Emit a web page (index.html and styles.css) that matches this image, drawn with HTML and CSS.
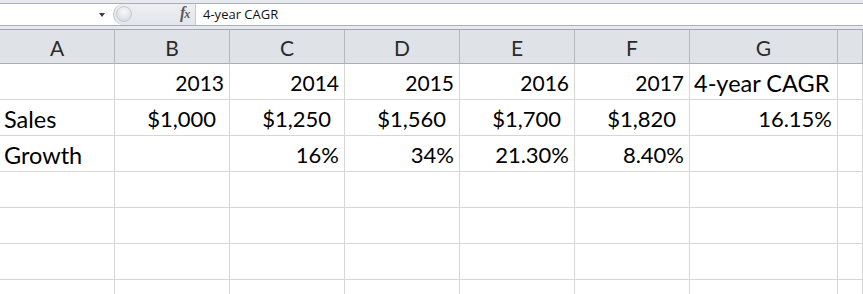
FILE: index.html
```html
<!DOCTYPE html>
<html>
<head>
<meta charset="utf-8">
<link rel="stylesheet" href="styles.css">
</head>
<body>
<div class="app">
  <div class="top-strip"></div>
  <div class="fbar">
    <div class="namebox"><span class="caret"></span></div>
    <div class="capsule">
      <span class="grip"></span>
      <span class="fx">f<span class="fx-x">x</span></span>
    </div>
    <div class="formula">4-year CAGR</div>
  </div>
  <div class="gap"></div>
  <div class="sheet">
    <div class="hd">A</div><div class="hd">B</div><div class="hd">C</div><div class="hd">D</div><div class="hd">E</div><div class="hd">F</div><div class="hd">G</div><div class="hd last"></div>

    <div class="c"></div><div class="c r yr">2013</div><div class="c r yr">2014</div><div class="c r yr">2015</div><div class="c r yr">2016</div><div class="c r yr">2017</div><div class="c l">4-year CAGR</div><div class="c"></div>

    <div class="c l">Sales</div><div class="c r cur">$1,000</div><div class="c r cur">$1,250</div><div class="c r cur">$1,560</div><div class="c r cur">$1,700</div><div class="c r cur">$1,820</div><div class="c r">16.15%</div><div class="c"></div>

    <div class="c l">Growth</div><div class="c"></div><div class="c r">16%</div><div class="c r">34%</div><div class="c r">21.30%</div><div class="c r">8.40%</div><div class="c"></div><div class="c"></div>

    <div class="c"></div><div class="c"></div><div class="c"></div><div class="c"></div><div class="c"></div><div class="c"></div><div class="c"></div><div class="c"></div>
    <div class="c"></div><div class="c"></div><div class="c"></div><div class="c"></div><div class="c"></div><div class="c"></div><div class="c"></div><div class="c"></div>
    <div class="c"></div><div class="c"></div><div class="c"></div><div class="c"></div><div class="c"></div><div class="c"></div><div class="c"></div><div class="c"></div>
    <div class="c"></div><div class="c"></div><div class="c"></div><div class="c"></div><div class="c"></div><div class="c"></div><div class="c"></div><div class="c"></div>
  </div>
</div>
</body>
</html>
```

FILE: styles.css
```css
html, body {
  margin: 0;
  padding: 0;
  background: #ffffff;
  overflow: hidden;
}
.app {
  width: 863px;
  height: 294px;
  overflow: hidden;
}
.top-strip {
  height: 3px;
  background: #e6e9ed;
  border-bottom: 1px solid #a9afb7;
}
.fbar {
  display: flex;
  height: 21px;
  background: #ffffff;
  border-bottom: 1px solid #a9afb7;
}
.namebox {
  width: 113px;
  position: relative;
  background: #ffffff;
}
.caret {
  position: absolute;
  left: 99px;
  top: 9px;
  width: 0;
  height: 0;
  border-left: 3.5px solid transparent;
  border-right: 3.5px solid transparent;
  border-top: 4px solid #3c3c3c;
}
.capsule {
  width: 83px;
  position: relative;
  background: linear-gradient(#eef0f3, #e2e5e9);
  border-radius: 11px 0 0 11px;
  border-left: 1px solid #b9bec5;
  box-sizing: border-box;
  border-right: 1px solid #c6cad0;
}
.grip {
  position: absolute;
  left: 2px;
  top: 2px;
  width: 16px;
  height: 16px;
  border-radius: 50%;
  background: radial-gradient(circle at 50% 35%, #f8f9fa, #d2d5da);
  border: 1px solid #c6cad0;
  box-sizing: border-box;
}
.fx {
  position: absolute;
  left: 66px;
  top: 0px;
  font-family: "Liberation Serif", serif;
  font-style: italic;
  font-weight: bold;
  font-size: 16px;
  color: #5a5a5a;
  letter-spacing: -1px;
}
.fx-x {
  font-size: 12px;
}
.formula {
  flex: 1;
  padding-left: 7px;
  font-family: "Open Sans", sans-serif;
  font-size: 13px;
  line-height: 21px;
  color: #111;
}
.gap {
  height: 3px;
  background: #e6e9ed;
  border-bottom: 1px solid #a0a6ae;
}
.sheet {
  display: grid;
  grid-template-columns: 115px 115px 115px 115px 115px 115px 148px 1fr;
  grid-template-rows: 34px repeat(7, 36px);
  font-family: "Lato", sans-serif;
  font-size: 22px;
  color: #000;
}
.hd {
  background: #dfe3e8;
  border-right: 1px solid #b5b9bf;
  border-bottom: 1px solid #a9aeb5;
  display: flex;
  align-items: center;
  justify-content: center;
  color: #2b2b2b;
  font-size: 21px;
  padding-top: 1px;
  box-sizing: border-box;
}
.c {
  border-right: 1px solid #d6d6d6;
  border-bottom: 1px solid #d6d6d6;
  display: flex;
  align-items: flex-end;
  padding-bottom: 3px;
  box-sizing: border-box;
  white-space: nowrap;
  overflow: visible;
  line-height: 26px;
}
.r {
  justify-content: flex-end;
  padding-right: 5px;
}
.r.yr {
  font-size: 21px;
}
.r.cur {
  padding-right: 13px;
}
.l {
  padding-left: 4px;
  font-size: 23.5px;
}
```
